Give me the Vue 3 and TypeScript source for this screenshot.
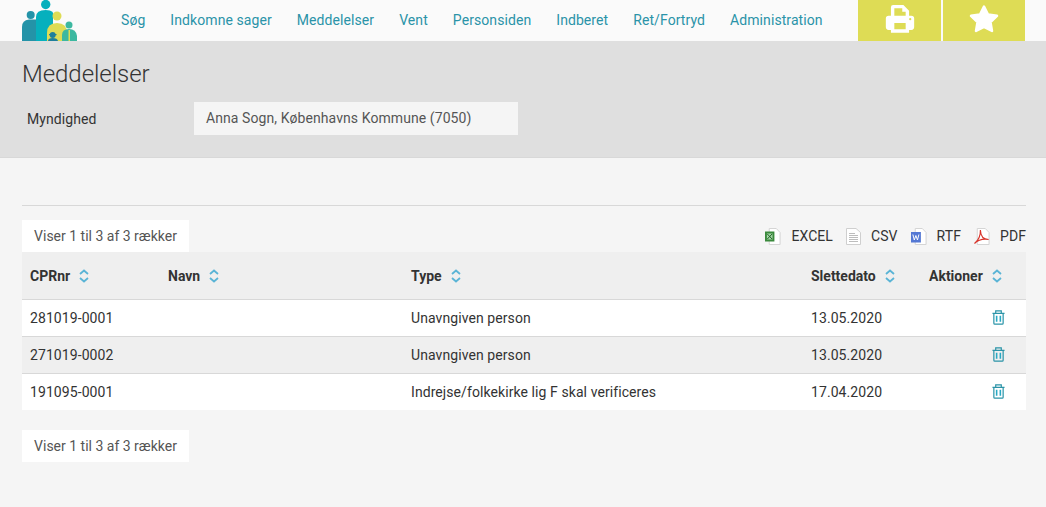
<script setup lang="ts">
const nav: string[] = ['Søg', 'Indkomne sager', 'Meddelelser', 'Vent', 'Personsiden', 'Indberet', 'Ret/Fortryd', 'Administration']
const columns = [
  { label: 'CPRnr', width: 138 },
  { label: 'Navn', width: 243 },
  { label: 'Type', width: 400 },
  { label: 'Slettedato', width: 118 },
  { label: 'Aktioner', width: 105 },
]
const rows = [
  { cpr: '281019-0001', type: 'Unavngiven person', date: '13.05.2020' },
  { cpr: '271019-0002', type: 'Unavngiven person', date: '13.05.2020' },
  { cpr: '191095-0001', type: 'Indrejse/folkekirke lig F skal verificeres', date: '17.04.2020' },
]
</script>

<template>
  <div class="page">
    <header class="top">
      <svg class="logo" width="56" height="41" viewBox="0 0 56 41">
        <circle cx="23.700" cy="4.500" r="4.700" fill="#06b0bd" />
        <path d="M14 41V17q0-7 9.700-7T31 17V41Z" fill="#06b0bd" />
        <circle cx="8.700" cy="15" r="4" fill="#2493a8" />
        <path d="M0 41V27q0-7 7-7.500h7V41Z" fill="#2493a8" />
        <circle cx="35" cy="16" r="4.500" fill="#dedc55" />
        <path d="M25 41V33q0-10 10-10T45 33V41Z" fill="#dedc55" />
        <circle cx="30.700" cy="35" r="3" fill="#1e7f9c" />
        <rect x="27" y="34" width="7.500" height="1.200" fill="#1e7f9c" />
        <path d="M26 41q0-3 4.700-3T36 41Z" fill="#1e7f9c" />
        <circle cx="47" cy="25" r="3.500" fill="#3cb8a0" />
        <path d="M40 41V35q0-6 7-6t8 7V41Z" fill="#3cb8a0" />
        <rect x="46.500" y="30" width="1.500" height="11" fill="#dedc55" />
      </svg>
      <nav class="nav">
        <a v-for="item in nav" :key="item" class="nav-link">{{ item }}</a>
      </nav>
      <div class="tools">
        <button class="tool" type="button" aria-label="Print">
          <svg width="34" height="34" viewBox="0 0 30 30">
            <path fill="#fff" fill-rule="evenodd" d="M7 5.500A2 2 0 0 1 9 3.500H18L23 8.500V13H25A2.500 2.500 0 0 1 27.500 15.500V23A2.500 2.500 0 0 1 25 25.500H23V28H7V25.500H5A2.500 2.500 0 0 1 2.500 23V15.500A2.500 2.500 0 0 1 5 13H7ZM10 6.500V13H20V9.500H17V6.500ZM10 19.500V25H20V19.500Z" />
            <circle cx="24" cy="16" r="1" fill="#dedc55" />
          </svg>
        </button>
        <button class="tool tool-narrow" type="button" aria-label="Favorit">
          <svg width="32" height="32" viewBox="0 0 32 32">
            <path fill="#fff" stroke="#fff" stroke-width="2.500" stroke-linejoin="round" d="M16 3.500 20 11.500 29 12.800 22.500 19.200 24 28 16 23.800 8 28 9.500 19.200 3 12.800 12 11.500Z" />
          </svg>
        </button>
      </div>
    </header>

    <section class="band">
      <h1 class="title">Meddelelser</h1>
      <div class="field-row">
        <label class="field-label">Myndighed</label>
        <div class="field-value">Anna Sogn, Københavns Kommune (7050)</div>
      </div>
    </section>

    <main class="content">
      <hr class="rule" />
      <div class="bar">
        <div class="info">Viser 1 til 3 af 3 rækker</div>
        <div class="exports">
          <a class="export">
            <svg width="16" height="17" viewBox="0 0 17 17" preserveAspectRatio="none"><path d="M4.500.5H12L16 4.500V16.500H4.500Z" fill="#fff" stroke="#d4d4d4" /><rect x="0" y="3.500" width="10" height="10" fill="#3a8a3c" /><path d="M2 5.500h6v6H2Z" fill="#a5d6a7" /><path d="M2.500 6l5 5M7.500 6l-5 5" stroke="#1b5e20" /></svg>
            <span>EXCEL</span>
          </a>
          <a class="export">
            <svg width="15" height="17" viewBox="0 0 15 17"><path d="M.5.500H10L14.500 4.500V16.500H.5Z" fill="#fff" stroke="#cfcfcf" /><path d="M3 5.500h6M3 7.500h9M3 9.500h9M3 11.500h9M3 13.500h9" stroke="#bdbdbd" /></svg>
            <span>CSV</span>
          </a>
          <a class="export">
            <svg width="16" height="17" viewBox="0 0 17 17" preserveAspectRatio="none"><path d="M4.500.5H12L16 4.500V16.500H4.500Z" fill="#fff" stroke="#d4d4d4" /><rect x="0" y="4" width="10.500" height="10.500" fill="#5478d4" /><path d="M2 6.500l1.500 5.500 1.700-4.500 1.700 4.500 1.500-5.500" fill="none" stroke="#fff" /></svg>
            <span>RTF</span>
          </a>
          <a class="export">
            <svg width="16" height="17" viewBox="0 0 17 17" preserveAspectRatio="none"><path d="M3.500.5H12L16 4.500V16.500H3.500Z" fill="#fff" stroke="#d4d4d4" /><path d="M.5 15.500C4 13 7 8 6.800 2 7 8 10 11.500 15.500 11.500 10 10.500 5 11.500.5 15.500Z" fill="none" stroke="#d8332a" stroke-width="1.200" /></svg>
            <span>PDF</span>
          </a>
        </div>
      </div>

      <table class="grid">
        <colgroup>
          <col v-for="c in columns" :key="c.label" :style="{ width: c.width + 'px' }" />
        </colgroup>
        <thead>
          <tr>
            <th v-for="c in columns" :key="c.label">
              <span class="th-label">{{ c.label }}</span>
              <svg class="sort" width="10" height="14" viewBox="0 0 10 14">
                <path d="M1 5 5 1.500 9 5M1 9 5 12.500 9 9" fill="none" stroke="#5ab4d6" stroke-width="1.800" />
              </svg>
            </th>
          </tr>
        </thead>
        <tbody>
          <tr v-for="r in rows" :key="r.cpr">
            <td>{{ r.cpr }}</td>
            <td></td>
            <td>{{ r.type }}</td>
            <td>{{ r.date }}</td>
            <td class="action">
              <svg width="13" height="15" viewBox="0 0 14 16" preserveAspectRatio="none">
                <path d="M.5 3.500H13.500M4 3.500V1H10V3.500M2 3.500V14A1 1 0 0 0 3 15H11A1 1 0 0 0 12 14V3.500" fill="none" stroke="#2b94a8" stroke-width="1.300" />
                <path d="M5 6V12.500M9 6V12.500" stroke="#28a9c4" stroke-width="1.700" />
              </svg>
            </td>
          </tr>
        </tbody>
      </table>

      <div class="info info-bottom">Viser 1 til 3 af 3 rækker</div>
    </main>
  </div>
</template>

<style>
html, body { margin: 0; background: #f5f5f5; }
</style>

<style scoped>
.page {
  font-family: Roboto, "Liberation Sans", sans-serif;
  font-size: 14px;
  letter-spacing: 0.08px;
  color: #333;
  min-height: 507px;
  background: #f5f5f5;
  overflow: hidden;
}
.top {
  display: flex;
  height: 41px;
  background: #fafafa;
  padding: 0 21px 0 22px;
  align-items: stretch;
}
.logo { flex: none; display: block; }
.nav {
  display: flex;
  gap: 25px;
  margin-left: 43px;
  flex: 1;
  align-items: center;
  padding-bottom: 1px;
}
.nav-link { color: #2a93a8; white-space: nowrap; }
.tools { display: flex; gap: 2px; }
.tool {
  width: 83px;
  border: 0;
  padding: 0 0 5px;
  background: #dedc55;
  display: flex;
  align-items: center;
  justify-content: center;
}
.tool-narrow { width: 82px; padding-bottom: 3px; }
.band {
  height: 116px;
  background: #dfdfdf;
  border-bottom: 1px solid #d8d8d8;
  padding: 0 22px;
}
.title {
  margin: 0;
  padding-top: 18px;
  font-size: 24px;
  line-height: 30px;
  font-weight: 300;
  letter-spacing: -0.05px;
  color: #333;
}
.field-row {
  display: flex;
  align-items: center;
  margin-top: 13px;
}
.field-label { width: 167px; padding-left: 5px; }
.field-value {
  width: 312px;
  height: 33px;
  line-height: 33px;
  padding-left: 12px;
  background: #f5f5f5;
  color: #555;
}
.content { padding: 0 20px 0 22px; }
.rule {
  margin: 47px 0 14px;
  border: 0;
  border-top: 1px solid #d8d8d8;
}
.bar { display: flex; justify-content: space-between; align-items: flex-end; }
.info {
  width: 167px;
  box-sizing: border-box;
  height: 32px;
  line-height: 33px;
  background: #fff;
  color: #555;
  letter-spacing: 0;
  text-align: center;
}
.info-bottom { margin-top: 20px; }
.exports { display: flex; gap: 13px; height: 32px; align-items: center; }
.export { display: flex; align-items: center; gap: 10px; color: #333; }
.export svg { display: block; }
.grid {
  width: 1004px;
  table-layout: fixed;
  border-collapse: collapse;
}
th {
  height: 47px;
  background: #efefef;
  border-bottom: 1px solid #d8d8d8;
  padding: 0 8px;
  text-align: left;
  font-weight: 700;
  letter-spacing: 0;
  white-space: nowrap;
}
.th-label { vertical-align: middle; }
.sort { margin-left: 9px; vertical-align: middle; }
td {
  height: 36px;
  padding: 0 8px;
  background: #fff;
  border-bottom: 1px solid #d8d8d8;
}
tr:nth-child(even) td { background: #efefef; }
tr:last-child td { border-bottom: 0; }
.action { text-align: right; padding-right: 21px; }
.action svg { display: inline-block; vertical-align: -2px; }
</style>
